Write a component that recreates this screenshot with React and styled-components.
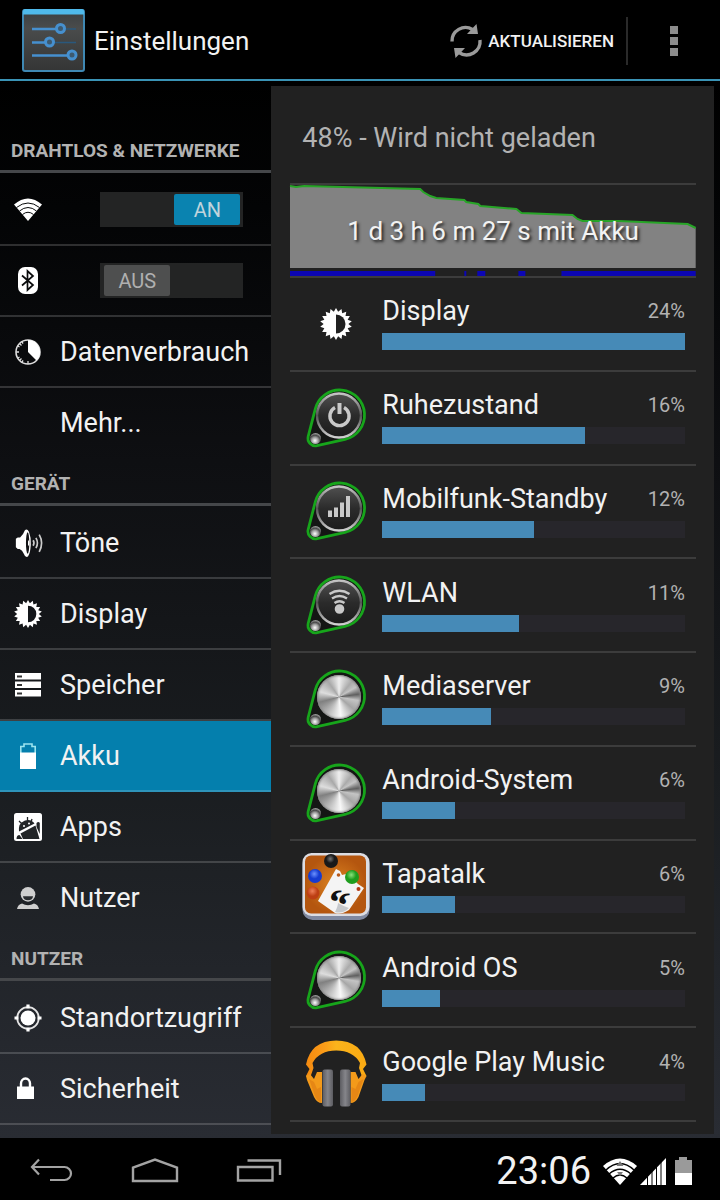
import React, { useState } from 'react';
import styled, { createGlobalStyle } from 'styled-components';

const COLORS = {
	selected: '#047fad',
	panel: '#212121',
	text: '#f2f2f2',
	muted: '#b2b2b2',
	line: 'rgba(255, 255, 255, 0.17)',
	bar: '#468ab7',
};

const GlobalStyle = createGlobalStyle`
	* {
		box-sizing: border-box;
	}
	body {
		margin: 0;
		background: #000;
		color: ${COLORS.text};
		font-family: Roboto, 'Noto Sans', sans-serif;
		font-size: 27px;
	}
	button {
		border: 0;
		padding: 0;
		background: none;
		color: inherit;
		font: inherit;
		cursor: pointer;
	}
	svg {
		display: block;
		flex: none;
		overflow: visible;
	}
`;

const Page = styled.div`
	display: flex;
	flex-direction: column;
	min-height: 100vh;
`;

/* Action bar */

const ActionBar = styled.header`
	display: flex;
	align-items: center;
	height: 81px;
	padding: 2px 0 0 22px;
	border-bottom: 2px solid #3a93b5;
`;

const Title = styled.h1`
	flex: 1;
	margin: 0 0 0 9px;
	font-size: 26px;
	font-weight: 400;
	line-height: 32px;
`;

const RefreshButton = styled.button`
	display: flex;
	align-items: center;
	gap: 6px;
	height: 48px;
	padding-right: 12px;
	border-right: 2px solid #2a2a2a;
	font-size: 17px;
	font-weight: 500;
`;

const MenuButton = styled.button`
	display: flex;
	flex-direction: column;
	align-items: center;
	gap: 3px;
	width: 92px;
`;

const Dot = styled.span`
	width: 8px;
	height: 8px;
	background: #8c8c8c;
`;

/* Two pane body */

const Body = styled.div`
	display: flex;
	flex: 1;
	padding: 5px 6px 4px 0;
	background: linear-gradient(#000 0%, #030405 12%, #0e0f12 36%, #1a1d20 66%, #292c33 100%);
`;

const Sidebar = styled.nav`
	flex: 0 0 38%;
	padding-top: 40px;
`;

const SectionTitle = styled.h2`
	display: flex;
	align-items: center;
	height: 47px;
	margin: 0 0 2px;
	padding: 4px 0 0 11px;
	border-bottom: 3px solid #45474a;
	color: ${COLORS.muted};
	font-size: 19px;
	font-weight: 700;
`;

const List = styled.ul`
	margin: 0;
	padding: 0;
	list-style: none;
`;

const SideRow = styled.li`
	display: flex;
	align-items: center;
	height: 71px;
	border-bottom: 2px solid ${(p) => (p.$last ? 'transparent' : COLORS.line)};
	background: ${(p) => (p.$selected ? COLORS.selected : 'none')};
`;

const SideLink = styled.a`
	display: flex;
	align-items: center;
	flex: 1;
	height: 100%;
	color: inherit;
	text-decoration: none;
`;

const IconSlot = styled.span`
	display: flex;
	justify-content: center;
	width: 56px;
	margin-right: 4px;
`;

const SwitchLabel = styled.label`
	display: flex;
	width: 143px;
	height: 35px;
	margin: 0 28px 0 auto;
	padding: 2px 3px;
	background: #232424;
	justify-content: ${(p) => (p.$on ? 'flex-end' : 'flex-start')};
	cursor: pointer;
`;

const SwitchInput = styled.input`
	width: 1px;
	height: 1px;
	margin: 0;
	appearance: none;
`;

const Thumb = styled.span`
	display: flex;
	align-items: center;
	justify-content: center;
	width: 66px;
	border-radius: 2px;
	background: ${(p) => (p.$on ? '#0a83b0' : '#4e4f4f')};
	color: ${(p) => (p.$on ? '#c0d4dc' : '#b0b0b0')};
	font-size: 20px;
`;

/* Battery panel */

const Panel = styled.main`
	display: flex;
	flex-direction: column;
	flex: 1;
	padding: 0 18px 12px 19px;
	background: ${COLORS.panel};
`;

const Status = styled.h2`
	display: flex;
	align-items: center;
	height: 99px;
	margin: 0;
	padding: 7px 0 0 12px;
	border-bottom: 2px solid #3c3c3c;
	color: ${COLORS.muted};
	font-size: 27px;
	font-weight: 400;
`;

const History = styled.div`
	position: relative;
	height: 93px;
	border-bottom: 2px solid #3c3c3c;
`;

const HistoryLabel = styled.span`
	position: absolute;
	inset: 0;
	padding-top: 30px;
	font-size: 26px;
	line-height: 32px;
	text-align: center;
	text-shadow: 2px 2px 3px #222;
`;

const UsageList = styled.ul`
	display: grid;
	flex: 1;
	grid-auto-rows: 1fr;
	margin: 0;
	padding: 0;
	list-style: none;
`;

const UsageRow = styled.li`
	display: flex;
	align-items: center;
	padding-right: 11px;
	border-bottom: 2px solid #3c3c3c;
`;

const AppIcon = styled.span`
	display: flex;
	justify-content: center;
	width: 92px;
`;

const Usage = styled.div`
	flex: 1;
	padding-bottom: 2px;
`;

const UsageHead = styled.div`
	display: flex;
	justify-content: space-between;
	align-items: center;
	height: 32px;
	margin-bottom: 6px;
`;

const Percent = styled.span`
	color: ${COLORS.muted};
	font-size: 20px;
`;

const Track = styled.div`
	height: 17px;
	background: #27262b;
`;

const Fill = styled.div`
	height: 100%;
	background: ${COLORS.bar};
`;

/* Navigation bar */

const NavBar = styled.footer`
	display: flex;
	align-items: center;
	height: 62px;
	padding: 4px 28px 0 29px;
`;

const NavButtons = styled.div`
	display: flex;
	flex: 1;
	gap: 56px;
`;

const Clock = styled.time`
	margin-right: 12px;
	font-size: 38px;
	line-height: 44px;
`;

const StatusIcons = styled.span`
	display: flex;
	align-items: center;
	gap: 3px;
`;

/* Icons */

const gearPoints = (c, outer, inner, teeth) => {
	const points = [];
	for (let i = 0; i < teeth * 2; i += 1) {
		const r = i % 2 ? inner : outer;
		const a = (Math.PI * i) / teeth - Math.PI / 2;
		points.push(`${(c + r * Math.cos(a)).toFixed(2)},${(c + r * Math.sin(a)).toFixed(2)}`);
	}
	return points.join(' ');
};

const BrightnessIcon = ({ size, hole }) => (
	<svg width={size} height={size} viewBox="0 0 32 32">
		<polygon points={gearPoints(16, 16, 12.4, 18)} fill="#fff" />
		<path d="M16 6.5a9.5 9.5 0 0 1 0 19z" fill={hole} />
	</svg>
);

const WifiIcon = () => (
	<svg width="28" height="23" viewBox="0 0 28 23">
		<path d="M0 6.500Q14-5.500 28 6.500L14 23z" fill="#fff" />
		<g fill="none" stroke="#07090a" strokeWidth="1">
			<path d="M2.500 9.500Q14 .500 25.500 9.500" />
			<path d="M5.500 13Q14 6 22.500 13" />
			<path d="M8.500 16.500Q14 12 19.500 16.500" />
		</g>
	</svg>
);

const BluetoothIcon = () => (
	<svg width="20" height="27" viewBox="0 0 20 27">
		<rect width="20" height="27" rx="7" fill="#fff" />
		<path d="M4 8.500l11 9.500-5.500 5V4l5.500 5L4 18.500" fill="none" stroke="#0a0b0c" strokeWidth="1.700" />
	</svg>
);

const DataIcon = () => (
	<svg width="26" height="26" viewBox="0 0 26 26">
		<circle cx="13" cy="13" r="12" fill="none" stroke="#ddd" strokeWidth="1.600" />
		<path d="M13 13V1a12 12 0 0 1 8.500 20.500z" fill="#fff" />
		<path d="M13 25v-3M1 13h3M4.500 4.500l2 2M4.500 21.500l2-2M7 2.600l1 2M2.600 7l2 1M2.600 19l2-1M7 23.400l1-2" stroke="#ddd" strokeWidth="1.300" />
	</svg>
);

const SoundIcon = () => (
	<svg width="28" height="30" viewBox="0 0 30 30">
		<path d="M2 10.500L4 9h2.500Q10 6 11.500 1.500Q14-1 16 3Q18.500 9 18 17Q17.500 26 15 29.500Q12 31 10.500 26.500Q9 22.500 6 21.500H4L2 19.500z" fill="#fff" />
		<ellipse cx="14.600" cy="15" rx="1.800" ry="11.500" fill="#121315" />
		<path d="M15 11.500q3 3.500 0 7z" fill="#fff" />
		<g fill="none" stroke="#ccc" strokeWidth="1.800">
			<path d="M20.500 12q1.800 3 0 6" />
			<path d="M23.500 9.500q3.200 5.500 0 11" />
			<path d="M27 6q5.200 9 0 18.500" />
		</g>
	</svg>
);

const StorageIcon = () => (
	<svg width="26" height="24" viewBox="0 0 26 24">
		<path d="M0 0h26v6.500H0zM0 8.500h26V15H0zM0 17h26v6.500H0z" fill="#fff" />
		<path d="M2 3.500h5M2 12h5M2 20.500h5" stroke="#333" strokeWidth="1.800" />
	</svg>
);

const BatteryIcon = () => (
	<svg width="16" height="26" viewBox="0 0 16 26">
		<path d="M.8 10V3.500H4V1h8v2.500h3.200V10" fill="none" stroke="#9be4ef" strokeWidth="1.600" />
		<path d="M0 9.500h16V26H0z" fill="#fff" />
	</svg>
);

const AppsIcon = () => (
	<svg width="28" height="28" viewBox="0 0 28 28">
		<rect width="28" height="28" rx="2.500" fill="#fff" />
		<g fill="#222527">
			<path d="M5 18.500Q4 10 11 7.500Q17 5.500 20.500 10.500z" />
			<path d="M6.500 20.500L21.500 12.500L25.500 26H9z" />
			<path d="M22.500 10q2-2 3.300 0v11l-3.300-7z" />
			<path d="M2.500 26q0-4 3-4l3 4z" />
		</g>
		<path d="M13.500 4v5M5 8l3 3M18 6l-1 3" stroke="#222527" strokeWidth="1.300" />
		<circle cx="10" cy="13" r="1" fill="#fff" />
		<circle cx="15" cy="10.500" r="1" fill="#fff" />
	</svg>
);

const UserIcon = () => (
	<svg width="22" height="24" viewBox="0 0 24 24">
		<circle cx="12" cy="8" r="8" fill="#cfcfcf" />
		<path d="M6.500 10h11q-.5 4.500-5.500 4.500T6.500 10z" fill="#2a2d30" />
		<path d="M0 24q1-5 5.500-6 3 2 6.500 2t6.500-2Q23 19 24 24z" fill="#cfcfcf" />
	</svg>
);

const LocationIcon = () => (
	<svg width="28" height="28" viewBox="0 0 28 28">
		<circle cx="14" cy="14" r="7.500" fill="#fff" />
		<circle cx="14" cy="14" r="10.800" fill="none" stroke="#e4e4e4" strokeWidth="1.800" />
		<path d="M14 .500v4M14 23.500v4M.500 14h4M23.500 14h4" stroke="#fff" strokeWidth="3.200" />
	</svg>
);

const LockIcon = () => (
	<svg width="22" height="21" viewBox="0 0 22 21">
		<path d="M4 9V5.500a4.500 5 0 0 1 9 0V9" fill="none" stroke="#fff" strokeWidth="2.400" />
		<path d="M0 8.500h17V21H0z" fill="#fff" />
	</svg>
);

const SettingsLogo = () => (
	<svg width="63" height="63" viewBox="0 0 63 63">
		<defs>
			<linearGradient id="logoBack" x1="0" y1="0" x2="0" y2="1">
				<stop offset="0" stopColor="#3a3e40" />
				<stop offset=".3" stopColor="#4a4c4c" />
				<stop offset="1" stopColor="#343535" />
			</linearGradient>
		</defs>
		<rect x="1" y="1" width="61" height="61" rx="2" fill="url(#logoBack)" stroke="#3f88b3" strokeWidth="2" />
		<path d="M1 5.500V2q0-2 2-2h57q2 0 2 2v3.500z" fill="#4fb9ea" />
		<path d="M31 20h23M26 33.500h28" stroke="#2a587c" strokeWidth="1.600" />
		<path d="M10 20h28M10 33.500h17M10 46.500h40" stroke="#4690cf" strokeWidth="2.400" />
		<g fill="#3d5a70" stroke="#4690cf" strokeWidth="3">
			<circle cx="38.500" cy="19.500" r="4" />
			<circle cx="27.500" cy="33" r="4" />
			<circle cx="50" cy="46" r="4" />
		</g>
	</svg>
);

const RefreshIcon = () => (
	<svg width="32" height="34" viewBox="0 0 32 34">
		<g fill="none" stroke="#9a9a9a" strokeWidth="3.400">
			<path d="M2 17.500A13.500 13.500 0 0 1 22.500 5.500" />
			<path d="M30 16A13.500 13.500 0 0 1 9 28.500" />
		</g>
		<path d="M26.500 0l1.500 10h-11zM5.500 34L4 24h11z" fill="#9a9a9a" />
	</svg>
);

const Dial = styled.div`
	width: 44px;
	height: 44px;
	border-radius: 50%;
	background: conic-gradient(#eee 0deg, #aaa 40deg, #c4c4c4 60deg, #606060 82deg, #c4c4c4 100deg, #a6a6a6 130deg, #f8f8f8 175deg, #bbb 215deg, #808080 255deg, #ddd 285deg, #a8a8a8 325deg, #eee 360deg);
	box-shadow: inset 0 0 2px 1px #888;
`;

const glyphs = {
	power: (
		<g fill="none" stroke="#c9c9c9" strokeWidth="3.400">
			<path d="M35 25.500a9.600 9.600 0 1 0 9 0" />
			<path d="M39.500 21v11" strokeWidth="4" />
		</g>
	),
	signal: <path d="M28 35.500h4V42h-4zM34 32.500h4V42h-4zM40 27.500h4V42h-4zM46 21h4v21h-4z" fill="#c9c9c9" />,
	wifi: (
		<g fill="none" stroke="#c9c9c9" strokeWidth="2.400">
			<circle cx="39.500" cy="40" r="3.600" fill="#c9c9c9" />
			<path d="M29.500 25q10-6.500 20 0M32 29.500q7.500-5 15 0M34.500 34q5-3.500 10 0" />
		</g>
	),
};

const KnobIcon = ({ glyph }) => (
	<svg width="72" height="72" viewBox="0 0 72 72">
		<defs>
			<linearGradient id="knobDark" x1="0" y1="0" x2="0" y2="1">
				<stop offset="0" stopColor="#505050" />
				<stop offset=".5" stopColor="#2b2b2b" />
				<stop offset="1" stopColor="#1b1b1b" />
			</linearGradient>
			<linearGradient id="knobRim" x1="0" y1="0" x2="0" y2="1">
				<stop offset="0" stopColor="#c4c4c4" />
				<stop offset=".5" stopColor="#555" />
				<stop offset="1" stopColor="#d0d0d0" />
			</linearGradient>
			<radialGradient id="ball" cx=".45" cy=".7" r=".7">
				<stop offset="0" stopColor="#fff" />
				<stop offset=".45" stopColor="#999" />
				<stop offset=".7" stopColor="#4a4a4a" />
				<stop offset="1" stopColor="#aaa" />
			</radialGradient>
		</defs>
		<path
			d="M15.300 26.800A25 25 0 1 1 45 57.400L17.100 63.600A7.500 7.500 0 0 1 8.200 54.400Z"
			fill="#141614"
			stroke="#17a51b"
			strokeWidth="2.800"
		/>
		{glyph ? (
			<>
				<circle cx="39" cy="33.500" r="22" fill="url(#knobDark)" stroke="url(#knobRim)" strokeWidth="2.400" />
				{glyphs[glyph]}
			</>
		) : (
			<foreignObject x="16.500" y="12" width="44" height="44">
				<Dial />
			</foreignObject>
		)}
		<circle cx="15.500" cy="56.500" r="5.500" fill="url(#ball)" />
	</svg>
);

const TapatalkIcon = () => (
	<svg width="72" height="72" viewBox="0 0 72 72">
		<defs>
			<radialGradient id="cork">
				<stop offset="0" stopColor="#dd8420" />
				<stop offset="1" stopColor="#b4560f" />
			</radialGradient>
			<radialGradient id="pinBlack" cx=".45" cy=".35">
				<stop offset="0" stopColor="#777" />
				<stop offset=".6" stopColor="#191919" />
			</radialGradient>
			<radialGradient id="pinBlue" cx=".45" cy=".35">
				<stop offset="0" stopColor="#6c92ff" />
				<stop offset=".7" stopColor="#153bd0" />
			</radialGradient>
			<radialGradient id="pinRed" cx=".45" cy=".35">
				<stop offset="0" stopColor="#ee8058" />
				<stop offset=".8" stopColor="#bd3f13" />
			</radialGradient>
			<radialGradient id="pinGreen" cx=".45" cy=".35">
				<stop offset="0" stopColor="#8be27c" />
				<stop offset=".7" stopColor="#1e9d1e" />
			</radialGradient>
		</defs>
		<rect x="2.500" y="3" width="67" height="66" rx="10" fill="#8089a0" />
		<rect x="2.500" y="2" width="67" height="63" rx="9" fill="#dcdde3" />
		<rect x="5" y="4.500" width="61" height="58" rx="6" fill="url(#cork)" />
		<path d="M18 50L36 18l4 2 2 4 4-1 3 3 2 5h5l2 2 6 4-15 22q-8 5-14 3z" fill="#f4f4f4" />
		<path d="M35 61q3-6 3-9 5 3 11 5-6 6-14 4z" fill="#c5c8cc" />
		<text x="28" y="62" fill="#111" fontFamily="Liberation Serif, serif" fontSize="40" fontWeight="700" transform="rotate(20 28 48)">“</text>
		<circle cx="31" cy="10" r="7" fill="url(#pinBlack)" />
		<circle cx="15" cy="25" r="7" fill="url(#pinBlue)" />
		<circle cx="13" cy="42" r="6.500" fill="url(#pinRed)" />
		<circle cx="52" cy="26" r="7" fill="url(#pinGreen)" />
		<circle cx="38.500" cy="24" r="1.800" fill="#b85a1c" />
		<circle cx="58.500" cy="38" r="2" fill="#b33a16" />
	</svg>
);

const HeadphonesIcon = () => (
	<svg width="72" height="72" viewBox="0 0 72 72">
		<defs>
			<linearGradient id="band">
				<stop offset="0" stopColor="#f58a10" />
				<stop offset=".3" stopColor="#fb9c18" />
				<stop offset=".5" stopColor="#fbb41c" />
				<stop offset="1" stopColor="#f9a912" />
			</linearGradient>
			<linearGradient id="pad">
				<stop offset="0" stopColor="#5c5c61" />
				<stop offset=".5" stopColor="#85858a" />
				<stop offset="1" stopColor="#5c5c61" />
			</linearGradient>
		</defs>
		<path d="M6 26.500Q11 2.500 36.200 2.500T66.500 26.500L63 31l3.500 7-4 2L59 30L60 25Q53 12.500 36.200 12.500T12.500 25L13.500 30L10 40l-4-2 3.500-7z" fill="url(#band)" />
		<path d="M6 38l4-2 4 5 3-7h5v31q-5 0-8-6L7 42z" fill="#f39a1a" />
		<path d="M66.500 38l-4-2-4 5-3-7h-5v31q5 0 8-6l6-17z" fill="#f39a1a" />
		<path d="M9 41l5 3 3 7 4-2v15q-4-1-6-6z" fill="#d9730f" opacity=".5" />
		<path d="M63.500 41l-5 3-3 7-4-2v15q4-1 6-6z" fill="#d9730f" opacity=".5" />
		<rect x="22.500" y="31.500" width="10.500" height="37" rx="2" fill="url(#pad)" />
		<rect x="40" y="31.500" width="10.500" height="37" rx="2" fill="url(#pad)" />
	</svg>
);

const BackIcon = () => (
	<svg width="46" height="26" viewBox="0 0 46 26">
		<path d="M10 1.500L3 9l7 7.500M3 9h32.500a6.500 6.500 0 0 1 0 13H21" fill="none" stroke="#a3a3a3" strokeWidth="2.200" />
	</svg>
);

const HomeIcon = () => (
	<svg width="48" height="26" viewBox="0 0 48 26">
		<path d="M2 23V9.500L24 1.500l22 8V23z" fill="none" stroke="#a3a3a3" strokeWidth="2.400" />
	</svg>
);

const RecentsIcon = () => (
	<svg width="46" height="26" viewBox="0 0 46 26">
		<path d="M3 9h34.500v13.500H3zM12.500 2.500H45V17" fill="none" stroke="#a3a3a3" strokeWidth="2.400" />
	</svg>
);

const StatusWifi = () => (
	<svg width="34" height="28" viewBox="0 0 34 28">
		<path d="M0 9Q17-6 34 9L17 28z" fill="#fff" />
		<g fill="none" stroke="#000" strokeWidth="1.500">
			<path d="M3 13Q17 0 31 13" />
			<path d="M6 17Q17 7.500 28 17" />
			<path d="M10 21Q17 15 24 21" />
		</g>
		<path d="M17 4l3.500 5h-7zM17 19l3-4h-6z" fill="#777" />
	</svg>
);

const StatusSignal = () => (
	<svg width="27" height="28" viewBox="0 0 27 28">
		<path d="M0 28L26 1v27z" fill="#fff" />
		<path d="M7.500 0v28M12 0v28M16.500 0v28M21 0v28" stroke="#000" strokeWidth="1" />
	</svg>
);

const StatusBattery = () => (
	<svg width="22" height="28" viewBox="0 0 22 28">
		<path d="M5 3h4V0h8v3h5v13H5z" fill="#9a9a9a" />
		<path d="M5 16h17v12H5z" fill="#fff" />
	</svg>
);

/* Content */

const SECTIONS = [
	{
		title: 'DRAHTLOS & NETZWERKE',
		items: [
			{ name: 'WLAN', icon: <WifiIcon />, toggle: true, on: true },
			{ name: 'Bluetooth', icon: <BluetoothIcon />, toggle: true, on: false },
			{ name: 'Datenverbrauch', icon: <DataIcon /> },
			{ name: 'Mehr...' },
		],
	},
	{
		title: 'GERÄT',
		items: [
			{ name: 'Töne', icon: <SoundIcon /> },
			{ name: 'Display', icon: <BrightnessIcon size={28} hole="#14161a" /> },
			{ name: 'Speicher', icon: <StorageIcon /> },
			{ name: 'Akku', icon: <BatteryIcon />, selected: true },
			{ name: 'Apps', icon: <AppsIcon /> },
			{ name: 'Nutzer', icon: <UserIcon /> },
		],
	},
	{
		title: 'NUTZER',
		open: true,
		items: [
			{ name: 'Standortzugriff', icon: <LocationIcon /> },
			{ name: 'Sicherheit', icon: <LockIcon /> },
		],
	},
];

const USAGE = [
	{ name: 'Display', percent: 24, level: 100, icon: <BrightnessIcon size={32} hole={COLORS.panel} /> },
	{ name: 'Ruhezustand', percent: 16, level: 67, icon: <KnobIcon glyph="power" /> },
	{ name: 'Mobilfunk-Standby', percent: 12, level: 50, icon: <KnobIcon glyph="signal" /> },
	{ name: 'WLAN', percent: 11, level: 45, icon: <KnobIcon glyph="wifi" /> },
	{ name: 'Mediaserver', percent: 9, level: 36, icon: <KnobIcon /> },
	{ name: 'Android-System', percent: 6, level: 24, icon: <KnobIcon /> },
	{ name: 'Tapatalk', percent: 6, level: 24, icon: <TapatalkIcon /> },
	{ name: 'Android OS', percent: 5, level: 19, icon: <KnobIcon /> },
	{ name: 'Google Play Music', percent: 4, level: 14, icon: <HeadphonesIcon /> },
];

const Switch = ({ name, initial }) => {
	const [on, setOn] = useState(initial);
	return (
		<SwitchLabel $on={on}>
			<SwitchInput type="checkbox" role="switch" aria-label={name} checked={on} onChange={() => setOn(!on)} />
			<Thumb $on={on}>{on ? 'AN' : 'AUS'}</Thumb>
		</SwitchLabel>
	);
};

const BatteryHistory = () => (
	<History>
		<svg width="100%" height="91" viewBox="0 0 405 91" preserveAspectRatio="none">
			<path
				d="M0 1l6 1 8-1 116 3 3 3 7 4 6 2 28 2 2 2 12 2 2 2 36 3 5 4 51 2 5 4 5 2 36 0 69 3 8 4V83H0z"
				fill="#828282"
			/>
			<path
				d="M0 1l6 1 8-1 116 3 3 3 7 4 6 2 28 2 2 2 12 2 2 2 36 3 5 4 51 2 5 4 5 2 36 0 69 3 8 4"
				fill="none"
				stroke="#27a527"
				strokeWidth="2"
			/>
			<path d="M0 88.500h145M174 88.500h2M187 88.500h8M228 88.500h7M271 88.500h134" stroke="#0c06b4" strokeWidth="5" />
		</svg>
		<HistoryLabel>1 d 3 h 6 m 27 s mit Akku</HistoryLabel>
	</History>
);

const App = () => (
	<Page>
		<GlobalStyle />
		<ActionBar>
			<SettingsLogo />
			<Title>Einstellungen</Title>
			<RefreshButton type="button">
				<RefreshIcon />
				AKTUALISIEREN
			</RefreshButton>
			<MenuButton type="button" aria-label="Menü">
				<Dot />
				<Dot />
				<Dot />
			</MenuButton>
		</ActionBar>
		<Body>
			<Sidebar>
				{SECTIONS.map((section) => (
					<section key={section.title}>
						<SectionTitle>{section.title}</SectionTitle>
						<List>
							{section.items.map((item, i) => (
								<SideRow
									key={item.name}
									$selected={item.selected}
									$last={!section.open && i === section.items.length - 1}
								>
									{item.toggle ? (
										<>
											<IconSlot>{item.icon}</IconSlot>
											<Switch name={item.name} initial={item.on} />
										</>
									) : (
										<SideLink href="#">
											<IconSlot>{item.icon}</IconSlot>
											{item.name}
										</SideLink>
									)}
								</SideRow>
							))}
						</List>
					</section>
				))}
			</Sidebar>
			<Panel>
				<Status>48% - Wird nicht geladen</Status>
				<BatteryHistory />
				<UsageList>
					{USAGE.map((app) => (
						<UsageRow key={app.name}>
							<AppIcon>{app.icon}</AppIcon>
							<Usage>
								<UsageHead>
									<span>{app.name}</span>
									<Percent>{app.percent}%</Percent>
								</UsageHead>
								<Track>
									<Fill style={{ width: `${app.level}%` }} />
								</Track>
							</Usage>
						</UsageRow>
					))}
				</UsageList>
			</Panel>
		</Body>
		<NavBar>
			<NavButtons>
				<button type="button" aria-label="Zurück"><BackIcon /></button>
				<button type="button" aria-label="Startseite"><HomeIcon /></button>
				<button type="button" aria-label="Letzte Apps"><RecentsIcon /></button>
			</NavButtons>
			<Clock>23:06</Clock>
			<StatusIcons>
				<StatusWifi />
				<StatusSignal />
				<StatusBattery />
			</StatusIcons>
		</NavBar>
	</Page>
);

export default App;
